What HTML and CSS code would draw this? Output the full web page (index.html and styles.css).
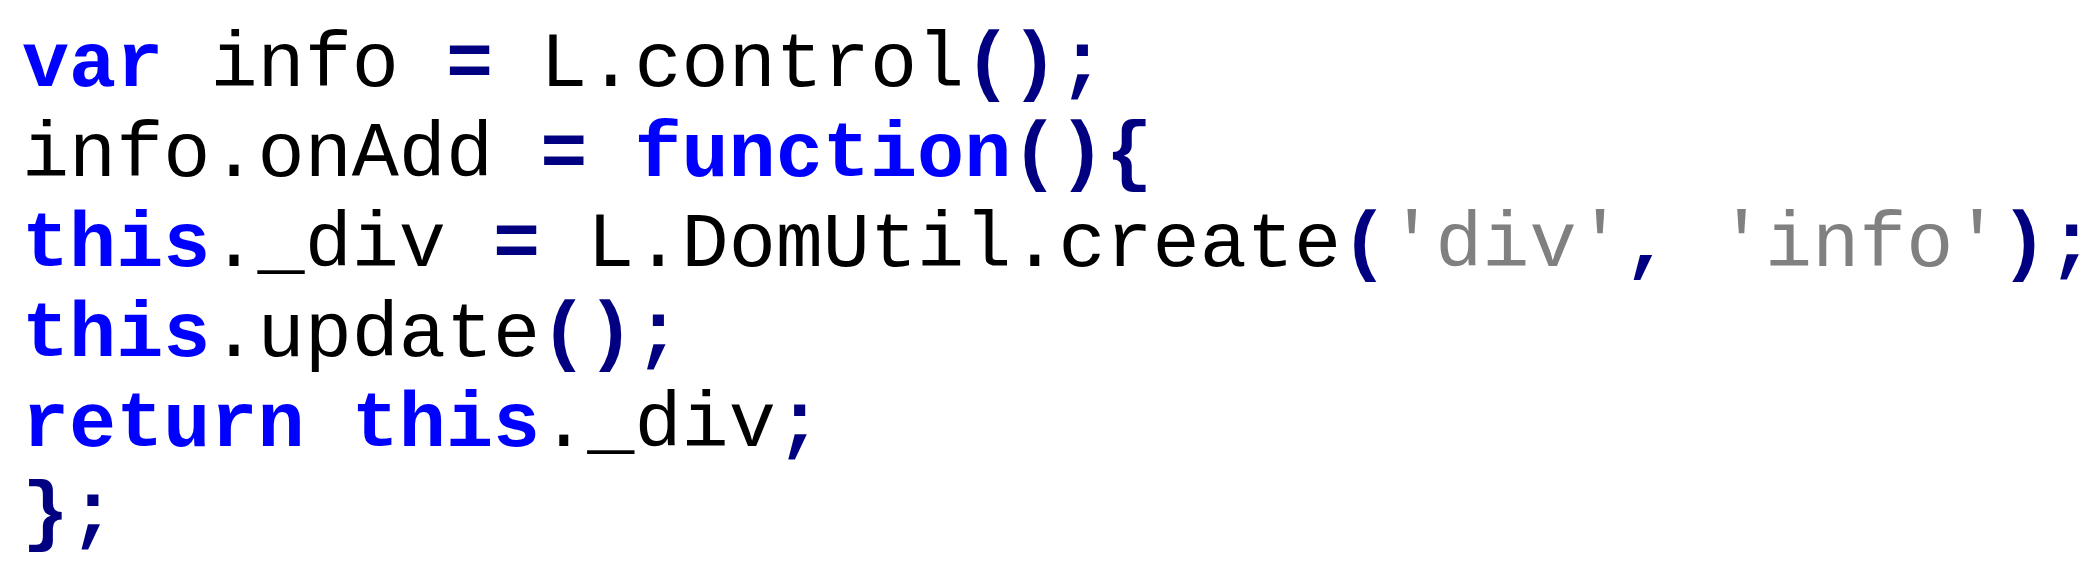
FILE: index.html
```html
<!DOCTYPE html>
<html>
<head>
<meta charset="utf-8">
<link rel="stylesheet" href="styles.css">
</head>
<body>
<pre class="code"><span class="kw">var</span> info <span class="op">=</span> L.control<span class="op">();</span>
info.onAdd <span class="op">=</span> <span class="kw">function</span><span class="op">(){</span>
<span class="kw">this</span>._div <span class="op">=</span> L.DomUtil.create<span class="op">(</span><span class="str">'div'</span><span class="op">,</span> <span class="str">'info'</span><span class="op">);</span>
<span class="kw">this</span>.update<span class="op">();</span>
<span class="kw">return</span> <span class="kw">this</span>._div<span class="op">;</span>
<span class="op">};</span></pre>
</body>
</html>
```
FILE: styles.css
```css
html, body {
  margin: 0;
  padding: 0;
  background: #ffffff;
}
.code {
  margin: 0;
  padding: 21px 0 0 22px;
  font-family: "Courier New", "Liberation Mono", monospace;
  font-size: 78.5px;
  line-height: 90px;
  color: #000000;
}
.kw {
  color: #0000ff;
  font-weight: bold;
}
.op {
  color: #000080;
  font-weight: bold;
}
.str {
  color: #808080;
}
```
